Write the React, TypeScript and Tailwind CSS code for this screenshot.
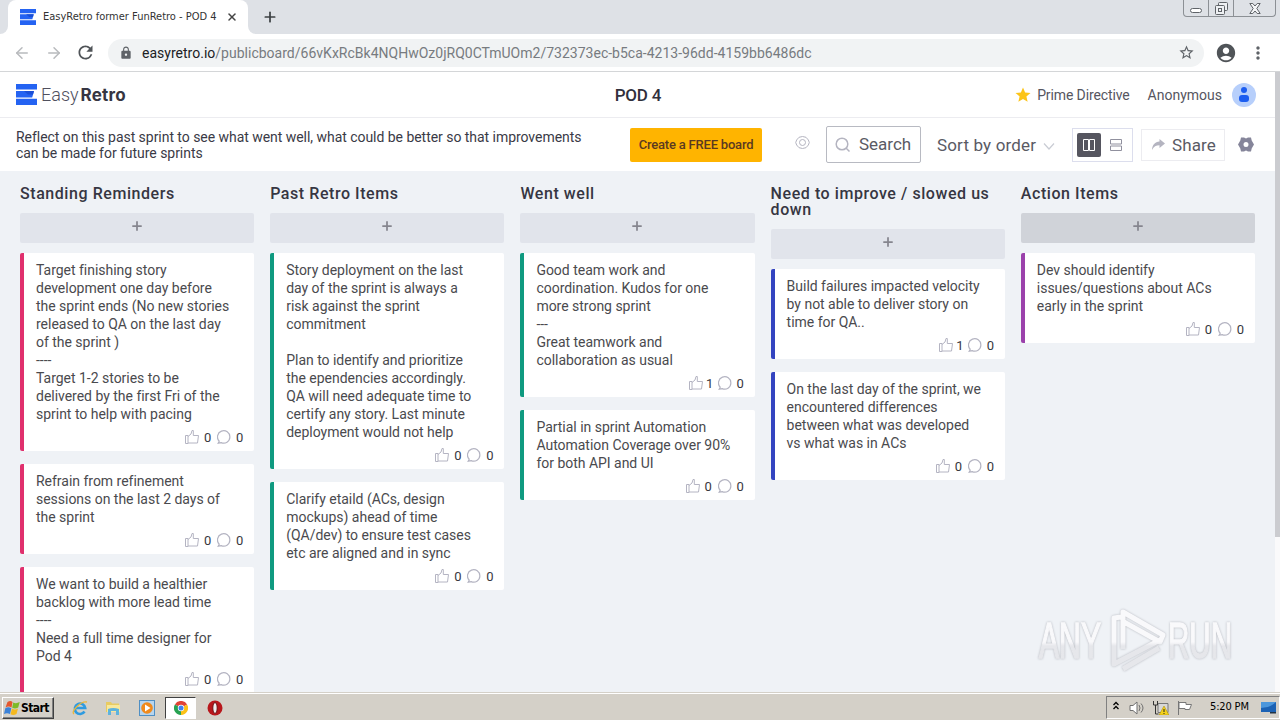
import { ArrowLeft, ArrowRight, Plus, X } from "lucide-react";
import { MdAccountCircle, MdLock, MdMoreVert, MdRefresh, MdStar, MdStarBorder } from "react-icons/md";

type CardData = { lines: string[]; likes: number };
type ColumnData = {
  title: string[];
  bar: string;
  button: string;
  cards: CardData[];
};

const columns: ColumnData[] = [
  {
    title: ["Standing Reminders"],
    bar: "border-[#e0306d]",
    button: "bg-[#e1e4eb]",
    cards: [
      {
        lines: [
          "Target finishing story",
          "development one day before",
          "the sprint ends (No new stories",
          "released to QA on the last day",
          "of the sprint )",
          "----",
          "Target 1-2 stories to be",
          "delivered by the first Fri of the",
          "sprint to help with pacing",
        ],
        likes: 0,
      },
      {
        lines: ["Refrain from refinement", "sessions on the last 2 days of", "the sprint"],
        likes: 0,
      },
      {
        lines: [
          "We want to build a healthier",
          "backlog with more lead time",
          "----",
          "Need a full time designer for",
          "Pod 4",
        ],
        likes: 0,
      },
    ],
  },
  {
    title: ["Past Retro Items"],
    bar: "border-[#0f9a80]",
    button: "bg-[#e1e4eb]",
    cards: [
      {
        lines: [
          "Story deployment on the last",
          "day of the sprint is always a",
          "risk against the sprint",
          "commitment",
          "",
          "Plan to identify and prioritize",
          "the ependencies accordingly.",
          "QA will need adequate time to",
          "certify any story. Last minute",
          "deployment would not help",
        ],
        likes: 0,
      },
      {
        lines: [
          "Clarify etaild (ACs, design",
          "mockups) ahead of time",
          "(QA/dev) to ensure test cases",
          "etc are aligned and in sync",
        ],
        likes: 0,
      },
    ],
  },
  {
    title: ["Went well"],
    bar: "border-[#0f9a80]",
    button: "bg-[#e1e4eb]",
    cards: [
      {
        lines: [
          "Good team work and",
          "coordination. Kudos for one",
          "more strong sprint",
          "---",
          "Great teamwork and",
          "collaboration as usual",
        ],
        likes: 1,
      },
      {
        lines: ["Partial in sprint Automation", "Automation Coverage over 90%", "for both API and UI"],
        likes: 0,
      },
    ],
  },
  {
    title: ["Need to improve / slowed us", "down"],
    bar: "border-[#3344c0]",
    button: "bg-[#e1e4eb]",
    cards: [
      {
        lines: ["Build failures impacted velocity", "by not able to deliver story on", "time for QA.."],
        likes: 1,
      },
      {
        lines: [
          "On the last day of the sprint, we",
          "encountered differences",
          "between what was developed",
          "vs what was in ACs",
        ],
        likes: 0,
      },
    ],
  },
  {
    title: ["Action Items"],
    bar: "border-[#9b41ab]",
    button: "bg-[#d0d3d9]",
    cards: [
      {
        lines: ["Dev should identify", "issues/questions about ACs", "early in the sprint"],
        likes: 0,
      },
    ],
  },
];

function Logo({ className }: { className: string }) {
  return (
    <svg viewBox="0 0 21 21" className={className} fill="#2463f2">
      <path d="M0 0h21v5.500H0zM0 7h18l-1.800 6.500H0zM0 14.800h21V21H0z" />
      <path d="M8 7h10l-1 3.500h-5z" fill="#1a4fd6" />
    </svg>
  );
}

function LikeIcon() {
  return (
    <svg viewBox="0 0 14 14" className="h-3.5 w-3.5" fill="none" stroke="#b4b4c2" strokeWidth="1">
      <path d="M.5 5.500h2.500v8H.5zM3 6.500l3-2.500 1-3.500h1.300v5h5.200l-1 7.500H3" />
    </svg>
  );
}

function CommentIcon() {
  return (
    <svg viewBox="0 0 14 14" className="h-3.5 w-3.5" fill="none" stroke="#b4b4c2" strokeWidth="1.200">
      <path d="M2.200 11.200A6.200 6.200 0 1 1 4.200 12.600L1.200 13.200z" />
    </svg>
  );
}

function Card({ card, bar }: { card: CardData; bar: string }) {
  return (
    <div className={`rounded-[2px] border-l-4 bg-white pt-2 pl-3 ${bar}`}>
      {card.lines.map((line, i) => (
        <p key={i} className="h-[18px] text-sm leading-[18px] tracking-[-0.02px] whitespace-pre text-[#4a4a4e]">
          {line}
        </p>
      ))}
      <div className="flex h-7 items-center justify-end pr-[11px] text-[13px] text-[#38383e]">
        <LikeIcon />
        <span className={`mt-px mr-1.5 ml-[5px] flex justify-center ${card.likes === 1 ? "w-1" : "w-[7px]"}`}>
          {card.likes}
        </span>
        <CommentIcon />
        <span className="mt-px ml-[5px] flex w-[7px] justify-center">0</span>
      </div>
    </div>
  );
}

function TabStrip() {
  return (
    <div className="flex h-[34px] bg-[#dee1e6]">
      <div className="w-2 bg-white">
        <div className="h-full rounded-br-lg bg-[#dee1e6]" />
      </div>
      <div className="flex w-[240px] items-center rounded-t-lg bg-white pl-3">
        <Logo className="h-4 w-4" />
        <span className="ml-[7px] w-[183px] font-['DejaVu_Sans_Condensed','DejaVu_Sans',sans-serif] text-[11px] whitespace-nowrap text-[#333]">
          EasyRetro former FunRetro - POD 4
        </span>
        <X size={12} strokeWidth={3} className="text-[#444]" />
      </div>
      <div className="w-2 bg-white">
        <div className="h-full rounded-bl-lg bg-[#dee1e6]" />
      </div>
      <Plus size={16} strokeWidth={2.6} className="mt-[9px] ml-1.5 text-[#3c4043]" />
      <div className="mr-1 ml-auto flex h-[17px] rounded-b border border-t-0 border-[#8c9095] text-[#5f6368]">
        <div className="flex w-[25px] items-end justify-center border-r border-[#8c9095] pb-[3px]">
          <div className="h-[5px] w-3 rounded-sm border border-[#5f6368] bg-white" />
        </div>
        <div className="flex w-[25px] items-center justify-center border-r border-[#8c9095]">
          <svg viewBox="0 0 13 13" className="h-[13px] w-[13px]" fill="#eef0f3" stroke="#5f6368">
            <rect x="3.500" y=".5" width="9" height="8" rx="1" />
            <rect x=".5" y="3.500" width="9" height="9" rx="1" />
            <rect x="3.500" y="6.500" width="3" height="3" />
          </svg>
        </div>
        <div className="flex w-[41px] items-center justify-center">
          <svg viewBox="0 0 12 11" className="h-[11px] w-3" fill="#f4f5f7" stroke="#5f6368">
            <path d="M.8.500h3L6 3 8.200.500h3L7.800 5.500l3.400 5h-3L6 8l-2.200 2.500h-3l3.400-5z" />
          </svg>
        </div>
      </div>
    </div>
  );
}

function Toolbar() {
  return (
    <div className="flex h-[38px] items-center border-b border-[#d4d6d8] bg-white pl-[13px] text-[#5f6368]">
      <ArrowLeft size={18} className="text-[#b8babd]" />
      <ArrowRight size={18} className="ml-3.5 text-[#b8babd]" />
      <MdRefresh size={21} className="ml-3 text-[#505458]" />
      <div className="ml-3 flex h-7 w-[1096px] items-center rounded-full bg-[#f1f3f4] pr-[9px] pl-[11px]">
        <MdLock size={14} />
        <span className="ml-[9px] text-sm tracking-[0.01px] whitespace-nowrap text-[#777b80]">
          <span className="text-[#202124]">easyretro.io</span>
          /publicboard/66vKxRcBk4NQHwOz0jRQ0CTmUOm2/732373ec-b5ca-4213-96dd-4159bb6486dc
        </span>
        <MdStarBorder size={17} className="ml-auto" />
      </div>
      <MdAccountCircle size={22} className="ml-[11px] text-[#505458]" />
      <MdMoreVert size={20} className="ml-[11px]" />
    </div>
  );
}

function Header() {
  return (
    <div className="grid h-[46px] grid-cols-3 items-center border-b border-[#ececf0] bg-white pr-[19px] pl-4">
      <div className="flex items-baseline">
        <Logo className="h-[21px] w-[21px] translate-y-1" />
        <span className="ml-1 text-[18px] font-light text-[#50505e]">Easy</span>
        <span className="ml-[2px] font-['Inter',sans-serif] text-[17px] font-bold tracking-[0.2px] text-[#363642]">
          Retro
        </span>
      </div>
      <h1 className="mt-0.5 ml-1 text-center text-[17px] font-medium tracking-[-0.2px] text-[#30303c]">POD 4</h1>
      <div className="flex items-center justify-end text-[14px] text-[#56565f]">
        <MdStar size={18} className="mr-[5px] text-[#fcc419]" />
        <span className="mt-0.5 tracking-[-0.12px]">Prime Directive</span>
        <span className="mt-0.5 ml-[18px]">Anonymous</span>
        <div className="ml-[10px] flex h-6 w-6 flex-col items-center justify-center gap-0.5 rounded-full bg-[#b7cffb]">
          <div className="h-1.5 w-1.5 rounded-full bg-[#1c5df0]" />
          <div className="h-[7px] w-2.5 rounded-[3px] bg-[#1c5df0]" />
        </div>
      </div>
    </div>
  );
}

function SubHeader() {
  return (
    <div className="flex h-[53px] items-center bg-white pl-4 text-[17px] text-[#5a5a64]">
      <p className="w-[614px] text-sm leading-4 tracking-[-0.04px] whitespace-nowrap text-[#3a3a46]">
        Reflect on this past sprint to see what went well, what could be better so that improvements
        <br />
        can be made for future sprints
      </p>
      <button className="h-[34px] w-[132px] rounded-[2px] bg-[#ffb400] pt-px text-[13px] font-medium tracking-[-0.2px] whitespace-nowrap text-[#5b3a20]">
        Create a FREE board
      </button>
      <svg viewBox="0 0 15 13" className="mb-1 ml-[33px] h-[13px] w-[15px]" fill="none" stroke="#b4b4c0">
        <path d="M4 1.300Q7.500-.3 11 1.300 14 4 14.300 6.500 14 9 11 11.700 7.500 13.300 4 11.700 1 9 .7 6.500 1 4 4 1.300z" />
        <circle cx="7.500" cy="6.500" r="3" />
      </svg>
      <div className="ml-4 flex h-[37px] w-[95px] items-center rounded-[2px] border border-[#b8bac2] pl-2">
        <svg viewBox="0 0 15 15" className="h-[15px] w-[15px]" fill="none" stroke="#b4b4c0" strokeWidth="1.500">
          <circle cx="7" cy="7" r="5.800" />
          <path d="M11 11l3.500 3.500" />
        </svg>
        <span className="ml-[9px]">Search</span>
      </div>
      <span className="mt-0.5 ml-4 w-[106px] tracking-[0.15px] whitespace-nowrap">Sort by order</span>
      <svg viewBox="0 0 12 7" className="mt-1 h-[7px] w-3" fill="none" stroke="#c9ccd4" strokeWidth="1.200">
        <path d="M1 .5l5 5.500 5-5.500" />
      </svg>
      <div className="ml-[17px] flex h-[34px] w-[61px] items-center border border-[#dcdeed] pl-1">
        <div className="flex h-6 w-6 items-center justify-center rounded-[2px] bg-[#55555f]">
          <svg viewBox="0 0 12 12" className="h-3 w-3" fill="none" stroke="#fff">
            <path d="M.5.500h5v11H.5zM6.500 .500h5v11h-5z" />
          </svg>
        </div>
        <svg viewBox="0 0 12 12" className="ml-[9px] h-3 w-3" fill="none" stroke="#90909e">
          <path d="M.5.500h11v4.500H.5zM.5 7h11v4.500H.5z" />
        </svg>
      </div>
      <div className="ml-2 flex h-8 w-[84px] items-center border border-[#ececf0] pl-[10px]">
        <svg viewBox="0 0 13 11" className="h-[11px] w-[13px]" fill="#b4b4c0">
          <path d="M7.500 0L13 4.500 7.500 9V6.300C4 6.300 1.800 7.500 0 11 .3 6 3 2.800 7.500 2.600z" />
        </svg>
        <span className="mt-0.5 ml-[7px] tracking-[0.1px]">Share</span>
      </div>
      <svg viewBox="0 0 16 15" className="ml-[13px] h-[15px] w-4" fill="#85859a">
        <path
          fillRule="evenodd"
          d="M3 .500h3L8 1.500l2-1h3l.7 3L16 7.500l-2.300 4-.7 3h-3l-2-1-2 1H3l-.7-3L0 7.500l2.300-4zM8 5a2.500 2.500 0 1 0 0 5 2.500 2.500 0 0 0 0-5z"
        />
      </svg>
    </div>
  );
}

function Watermark() {
  return (
    <svg
      viewBox="0 0 200 70"
      className="absolute top-[433px] left-[1035px] h-[70px] w-[200px] overflow-visible drop-shadow-[0_0_1px_#b4b6bd]"
      fill="none"
      stroke="url(#mark)"
      strokeWidth="5"
    >
      <defs>
        <linearGradient id="mark" gradientUnits="userSpaceOnUse" x1="0" y1="16" x2="0" y2="56">
          <stop offset="0.55" stopColor="#f9f9fb" />
          <stop offset="0.65" stopColor="#e6e7eb" />
        </linearGradient>
      </defs>
      <g
        fill="url(#mark)"
        strokeWidth="1.500"
        fontFamily="'Liberation Sans Narrow', 'Liberation Sans', sans-serif"
        fontSize="50"
      >
        <text x="4" y="54" textLength="62" lengthAdjust="spacingAndGlyphs">
          ANY
        </text>
        <text x="133" y="54" textLength="64" lengthAdjust="spacingAndGlyphs">
          RUN
        </text>
      </g>
      <path d="M86 13l-7 1v46l46-24M88 45V8l40 23-3 7-36-20M88 65l36-21" strokeLinejoin="round" />
    </svg>
  );
}

function Board() {
  return (
    <div className="relative flex h-[521px] overflow-hidden bg-[#eff2f6]">
      <div className="grid w-[1275px] grid-cols-5 items-start gap-4 pt-3.5 pr-5 pl-5">
        {columns.map((column) => (
          <div key={column.title[0]}>
            <h2 className="pt-px text-base leading-4 font-medium tracking-[0.56px] whitespace-nowrap text-[#363642]">
              {column.title.map((line) => (
                <span key={line} className="block">
                  {line}
                </span>
              ))}
            </h2>
            <button
              className={`mt-[11px] flex h-[30px] w-full items-center justify-center rounded-[2px] pb-1 ${column.button}`}
            >
              <Plus size={14} strokeWidth={3} className="text-[#85858e]" />
            </button>
            <div className="mt-2.5 flex flex-col gap-[13px]">
              {column.cards.map((card) => (
                <Card key={card.lines[0]} card={card} bar={column.bar} />
              ))}
            </div>
          </div>
        ))}
      </div>
      <Watermark />
    </div>
  );
}

function Taskbar() {
  return (
    <div className="flex h-7 items-center border-t border-[#d4d0c8] bg-[#d4d0c8] pl-0.5 font-['DejaVu_Sans_Condensed','DejaVu_Sans',sans-serif] text-[11px] text-black shadow-[inset_0_1px_#fff]">
      <div className="mt-0.5 flex h-[22px] w-[52px] items-center border border-t-white border-r-[#404040] border-b-[#404040] border-l-white pl-px shadow-[inset_-1px_-1px_#808080]">
        <svg viewBox="0 0 16 16" className="h-4 w-4 shrink-0">
          <path d="M3.500 2q3-2 5 0L7.500 7.500Q4.500 5.500 1.500 7.500z" fill="#e4572e" />
          <path d="M9.200 2.500q3 1.500 6.500-.5l-1.500 5.500q-3 2-6 .3z" fill="#7dba28" />
          <path d="M1.300 8.300q3-2 6 0L6 14Q3 12.500 0 14z" fill="#3b82d8" />
          <path d="M8 8.500q3 2 6 0L12.500 14q-3 2-6 .3z" fill="#f5b91f" />
        </svg>
        <span className="ml-px text-[12px] font-bold tracking-[-0.6px]">Start</span>
      </div>
      <svg viewBox="0 0 16 16" className="mt-0.5 ml-[18px] h-4 w-4" fill="none">
        <path d="M12.500 11.500A5.200 5.200 0 1 1 13.200 8H3.500" stroke="#2f9be0" strokeWidth="2.600" />
        <path d="M2 14Q-.5 12 5 6.500T15 2" stroke="#e9b63a" strokeWidth="1.300" />
      </svg>
      <svg viewBox="0 0 16 16" className="mt-0.5 ml-[17px] h-4 w-4">
        <path d="M1 2h5l1 1.500h7V12H1z" fill="#e8cb62" />
        <path d="M2 5h13v7H2z" fill="#f8e89b" />
        <path d="M3 9q5-2 11 0v6h-3v-4H6v4H3z" fill="#5eb3dd" />
      </svg>
      <svg viewBox="0 0 16 16" className="mt-0.5 ml-[18px] h-4 w-4">
        <rect x=".5" y=".5" width="15" height="15" fill="#b7d5ee" stroke="#4f8fc4" />
        <circle cx="8" cy="8" r="5.800" fill="#f08a1c" />
        <path d="M6 4.500l5.500 3.500L6 11.500z" fill="#fff" />
      </svg>
      <div className="mt-0.5 ml-[10px] flex h-[22px] w-[31px] items-center justify-center border border-t-[#404040] border-r-white border-b-white border-l-[#404040] bg-white">
        <svg viewBox="0 0 14 14" className="h-3.5 w-3.5">
          <path d="M7 7L.9 3.500A7 7 0 0 1 13.100 3.500z" fill="#e04336" />
          <path d="M7 7V14A7 7 0 0 1 .9 3.500z" fill="#27a252" />
          <path d="M7 7l6.100-3.500A7 7 0 0 1 7 14z" fill="#fbc116" />
          <circle cx="7" cy="7" r="3.200" fill="#fff" />
          <circle cx="7" cy="7" r="2.500" fill="#3f82f0" />
        </svg>
      </div>
      <svg viewBox="0 0 16 16" className="mt-0.5 ml-[11px] h-4 w-4">
        <circle cx="8" cy="8" r="7.500" fill="#b8171c" />
        <ellipse cx="8" cy="8" rx="2.200" ry="5.500" fill="#eee" stroke="#6e0c10" />
      </svg>
      <div className="mt-0.5 ml-auto flex h-[23px] w-[174px] items-center border border-t-[#808080] border-r-white border-b-white border-l-[#808080] pl-[6px]">
        <svg viewBox="0 0 6 9" className="mb-1 h-[9px] w-1.5" fill="none" stroke="#000" strokeWidth="1.300">
          <path d="M.5 4L3 1.500 5.500 4M.5 8L3 5.500 5.500 8" />
        </svg>
        <svg viewBox="0 0 17 14" className="ml-[10px] h-3.5 w-[17px]" fill="none" stroke="#707070">
          <path d="M1 4.500h3L8 1v12L4 9.500H1z" fill="#fff" />
          <path d="M10 4q2 3 0 6M12 2.500q4 4.500 0 9" />
        </svg>
        <svg viewBox="0 0 16 14" className="ml-[7px] h-3.5 w-4">
          <path d="M5 2.500h10v9H5z" fill="#d8d8d8" stroke="#777" />
          <path d="M.5 0v4h4V0M2.500 4v9h3" fill="none" stroke="#333" />
          <path d="M11 5l5 9H6z" fill="#f5d21c" stroke="#a38600" strokeWidth=".5" />
          <path d="M11 8v3M11 12v1" stroke="#222" />
        </svg>
        <svg viewBox="0 0 16 14" className="ml-2 h-3.5 w-4" fill="#fff" stroke="#777">
          <path d="M1.500 0v14M2 1.500h7v2h5.500l-2 5H8V7.500H2z" />
        </svg>
        <span className="ml-[17px] w-[45px] tracking-[-0.15px] whitespace-nowrap">5:20 PM</span>
        <svg viewBox="0 0 15 13" className="ml-1.5 h-[13px] w-[15px]">
          <path d="M0 1h15v10H0z" fill="#1c62b4" />
          <path d="M0 1h15Q9 7 0 7z" fill="#4c97dc" />
          <path d="M9 11h6v1.500H9z" fill="#234" />
        </svg>
      </div>
    </div>
  );
}

export default function App() {
  return (
    <div className="flex h-[720px] w-[1280px] flex-col overflow-hidden bg-white font-['Roboto',sans-serif]">
      <TabStrip />
      <Toolbar />
      <div className="flex h-[620px]">
        <div className="w-[1275px] overflow-hidden">
          <Header />
          <SubHeader />
          <Board />
        </div>
        <div className="w-[5px] bg-[#fafafb]">
          <div className="h-[465px] bg-[#cbccd0]" />
        </div>
      </div>
      <Taskbar />
    </div>
  );
}
